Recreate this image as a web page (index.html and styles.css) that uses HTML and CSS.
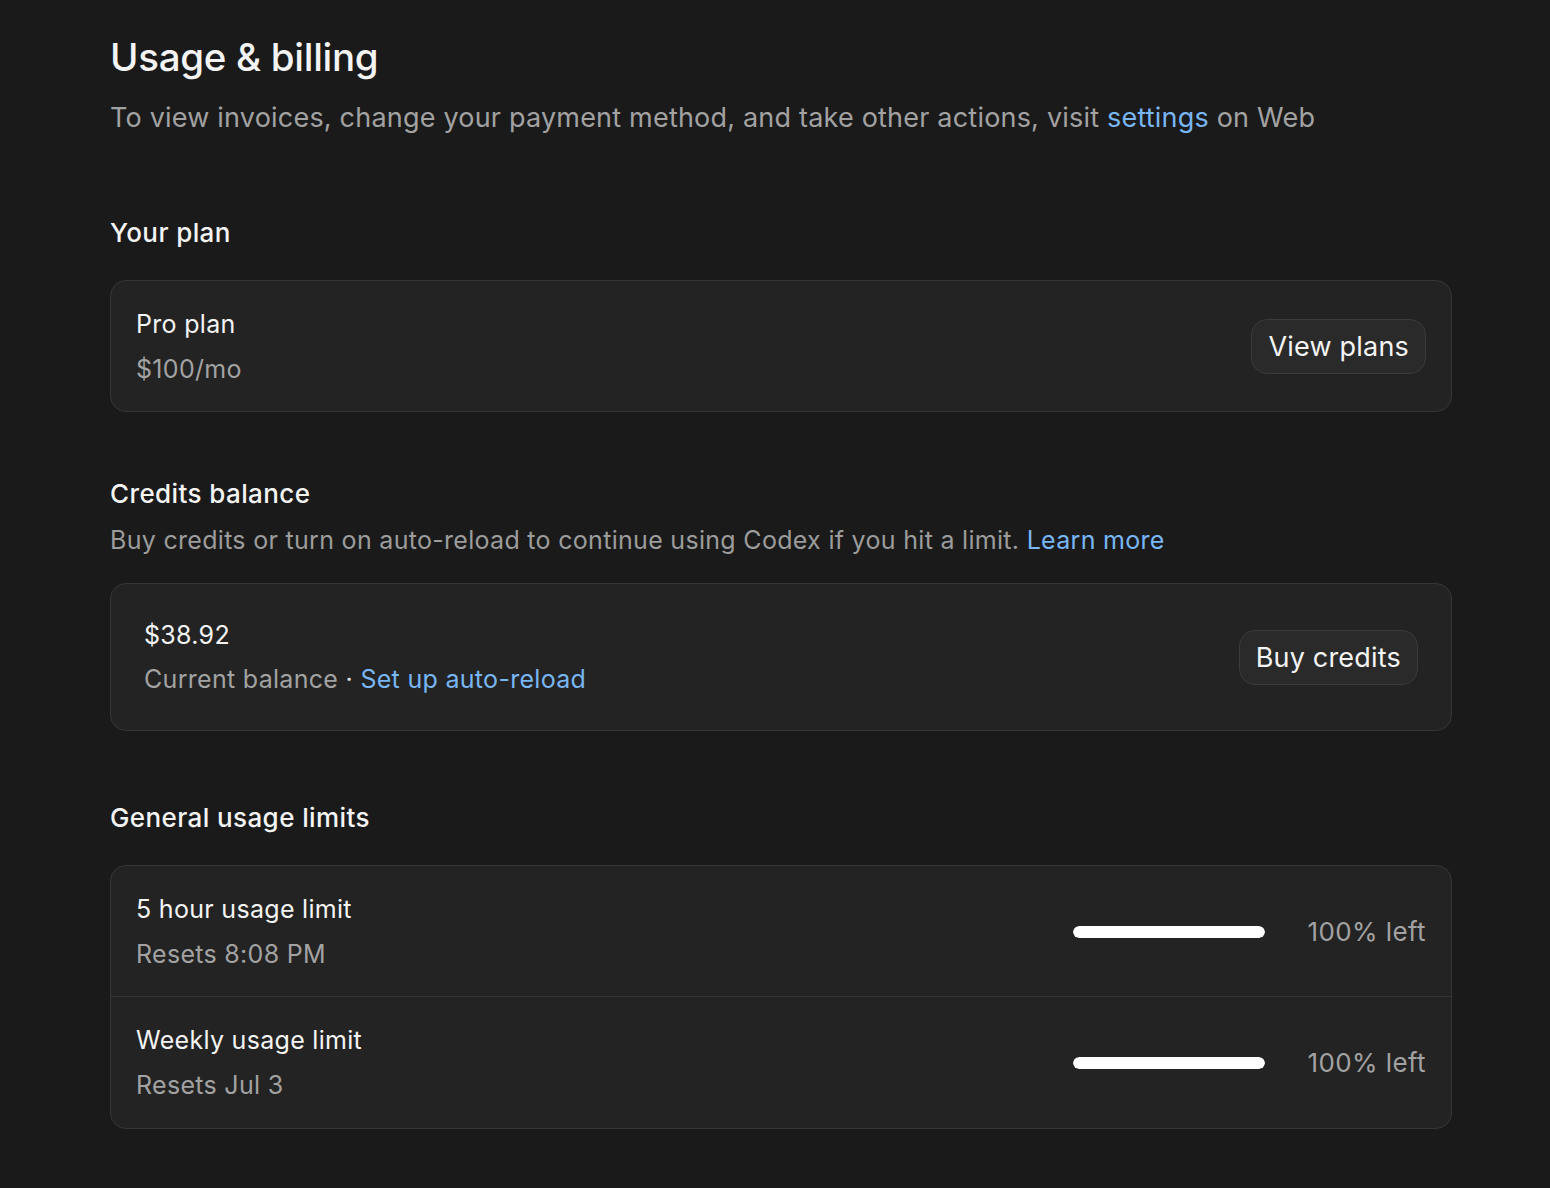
FILE: index.html
```html
<!DOCTYPE html>
<html lang="en">
<head>
    <meta charset="UTF-8">
    <title>Usage &amp; billing</title>
    <link rel="stylesheet" href="styles.css">
</head>
<body>
    <div class="page">
        <h1 class="title">Usage &amp; billing</h1>
        <p class="intro">To view invoices, change your payment method, and take other actions, visit <a href="#" class="link">settings</a> on Web</p>

        <!-- Plan -->
        <h2 class="section-title plan-title">Your plan</h2>
        <div class="card row-card plan-card">
            <div class="info">
                <div class="primary">Pro plan</div>
                <div class="secondary">$100/mo</div>
            </div>
            <button class="btn">View plans</button>
        </div>

        <!-- Credits -->
        <h2 class="section-title credits-title">Credits balance</h2>
        <p class="section-desc">Buy credits or turn on auto-reload to continue using Codex if you hit a limit. <a href="#" class="link">Learn more</a></p>
        <div class="card row-card credits-card">
            <div class="info">
                <div class="primary">$38.92</div>
                <div class="secondary">Current balance <span class="dot">·</span> <a href="#" class="link">Set up auto-reload</a></div>
            </div>
            <button class="btn">Buy credits</button>
        </div>

        <!-- Limits -->
        <h2 class="section-title limits-title">General usage limits</h2>
        <div class="card limits-card">
            <div class="limit-row">
                <div class="info">
                    <div class="primary">5 hour usage limit</div>
                    <div class="secondary">Resets 8:08 PM</div>
                </div>
                <div class="meter">
                    <div class="bar"><div class="bar-fill" style="width: 100%"></div></div>
                    <span class="meter-label">100% left</span>
                </div>
            </div>
            <div class="limit-row">
                <div class="info">
                    <div class="primary">Weekly usage limit</div>
                    <div class="secondary">Resets Jul 3</div>
                </div>
                <div class="meter">
                    <div class="bar"><div class="bar-fill" style="width: 100%"></div></div>
                    <span class="meter-label">100% left</span>
                </div>
            </div>
        </div>
    </div>
</body>
</html>
```

FILE: styles.css
```css
/* Page */
body {
    margin: 0;
    background-color: #1a1a1a;
    color: #f4f4f4;
    font-family: Inter, "Noto Sans", sans-serif;
}
.page {
    width: 1342px;
    padding: 33px 0 40px 110px;
}

/* Headings and text */
.title {
    margin: 0;
    font-size: 38.5px;
    line-height: 48px;
    font-weight: 500;
    letter-spacing: -0.3px;
}
.intro {
    margin: 19px 0 0;
    font-size: 27px;
    line-height: 36px;
    letter-spacing: 0.2px;
    color: #a2a2a2;
}
.link {
    color: #78b6f4;
    text-decoration: none;
}
.section-title {
    margin: 0;
    font-size: 26px;
    line-height: 32px;
    font-weight: 500;
    letter-spacing: 0.4px;
}
.plan-title {
    margin-top: 81px;
}
.credits-title {
    margin-top: 66px;
}
.limits-title {
    margin-top: 71px;
}
.section-desc {
    margin: 14px 0 0;
    font-size: 25px;
    line-height: 32px;
    letter-spacing: 0.3px;
    color: #9c9c9c;
}

/* Cards */
.card {
    background-color: #232323;
    border: 1px solid #363636;
    border-radius: 16px;
}
.row-card {
    display: flex;
    align-items: center;
    justify-content: space-between;
}
.plan-card {
    margin-top: 31px;
    padding: 27px 25px 26px;
}
.credits-card {
    margin-top: 27px;
    padding: 35px 33px 35px;
}
.limits-card {
    margin-top: 31px;
}
.info {
    display: flex;
    flex-direction: column;
    gap: 13px;
}
.credits-card .info {
    gap: 12px;
}
.primary {
    font-size: 25px;
    line-height: 32px;
    letter-spacing: 0.3px;
}
.secondary {
    font-size: 25px;
    line-height: 32px;
    letter-spacing: 0.3px;
    color: #a2a2a2;
}
.dot {
    color: #e0e0e0;
}

/* Buttons */
.btn {
    height: 55px;
    padding: 0 16px;
    background-color: #2a2a2a;
    border: 1px solid #3b3b3b;
    border-radius: 16px;
    color: #f4f4f4;
    font-family: inherit;
    font-size: 27px;
    letter-spacing: 0.2px;
}

/* Usage rows */
.limit-row {
    display: flex;
    align-items: center;
    justify-content: space-between;
    padding: 27px 25px 26px;
}
.limit-row + .limit-row {
    border-top: 1px solid #333333;
    padding-bottom: 27px;
}
.meter {
    display: flex;
    align-items: center;
    gap: 42px;
}
.bar {
    width: 192px;
    height: 12px;
    border-radius: 6px;
    background-color: #3a3a3a;
    overflow: hidden;
}
.bar-fill {
    height: 100%;
    background-color: #ffffff;
    border-radius: 6px;
}
.meter-label {
    font-size: 26px;
    line-height: 32px;
    letter-spacing: 0.4px;
    color: #a2a2a2;
}
```
